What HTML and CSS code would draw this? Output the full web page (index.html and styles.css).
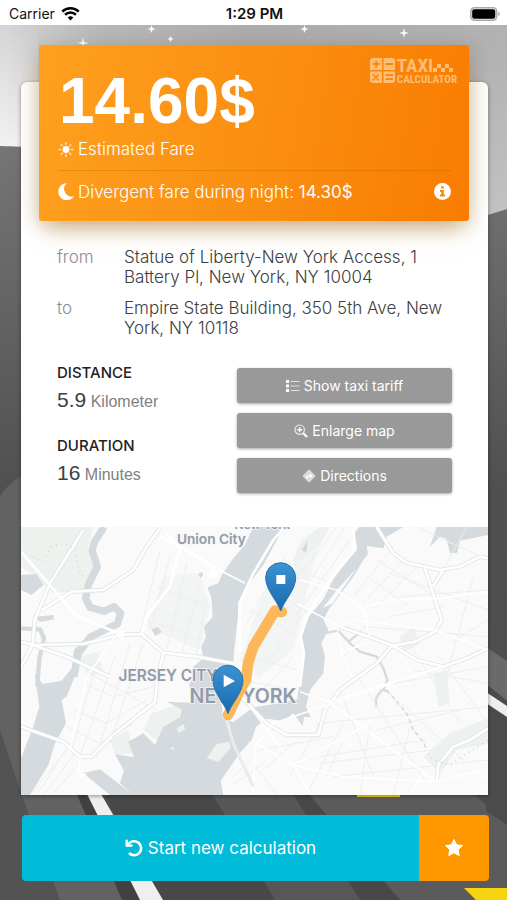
FILE: index.html
```html
<!DOCTYPE html>
<html lang="en">
<head>
    <meta charset="UTF-8">
    <meta name="viewport" content="width=device-width, initial-scale=1.0">
    <title>Taxi Calculator</title>
    <link rel="stylesheet" href="styles.css">
</head>
<body>
    <header class="status-bar">
        <div class="carrier">
            <span>Carrier</span>
            <svg class="wifi" viewBox="0 0 20 15">
                <path d="M10 14.5l3-3.2a4.3 4.3 0 0 0-6 0z"/>
                <path d="M4.2 8.3a8.3 8.3 0 0 1 11.6 0M1.2 5a12.6 12.6 0 0 1 17.6 0" fill="none" stroke="#000" stroke-width="2.7"/>
            </svg>
        </div>
        <time class="clock">1:29 PM</time>
        <div class="battery">
            <svg viewBox="0 0 30 14">
                <rect x="0.7" y="0.7" width="26" height="12.6" rx="3.6" fill="#ddd" stroke="#aaa" stroke-width="1.3"/>
                <rect x="2.2" y="2.2" width="23" height="9.6" rx="2.2"/>
                <path d="M28.2 4.8v4.4q1.6-.6 1.6-2.2t-1.6-2.2z" fill="#aaa"/>
            </svg>
        </div>
    </header>

    <main class="screen">
        <!-- Night road scenery -->
        <svg class="scenery" viewBox="0 0 507 875" preserveAspectRatio="none">
            <defs>
                <linearGradient id="sky" x1="0" y1="0" x2="1" y2="0">
                    <stop offset="0" stop-color="#d6d6d6"/>
                    <stop offset="0.2" stop-color="#b8b8b8"/>
                    <stop offset="0.5" stop-color="#acacac"/>
                    <stop offset="1" stop-color="#b2b2b2"/>
                </linearGradient>
                <linearGradient id="glow" x1="0" y1="0" x2="0" y2="1">
                    <stop offset="0" stop-color="#fff" stop-opacity="0"/>
                    <stop offset="1" stop-color="#fff" stop-opacity="0.75"/>
                </linearGradient>
                <linearGradient id="ground" x1="0" y1="0" x2="0" y2="1">
                    <stop offset="0" stop-color="#757575"/>
                    <stop offset="0.45" stop-color="#505050"/>
                    <stop offset="1" stop-color="#4c4c4c"/>
                </linearGradient>
            </defs>
            <rect width="507" height="200" fill="url(#sky)"/>
            <rect width="38" height="130" fill="url(#glow)"/>
            <rect x="470" y="20" width="37" height="180" fill="url(#glow)" opacity="0.3"/>
            <path d="M0 121L60 123L440 200L488 190L507 184V875H0z" fill="url(#ground)"/>
            <path d="M0 471Q10 455 40 440V765L75 765L130 875H0z" fill="#626262"/>
            <path d="M0 705L20 765L60 875H0z" fill="#535353"/>
            <path d="M75 765H88L142 875H122z" fill="#414141"/>
            <path d="M102 765H360L420 875H163z" fill="#484848"/>
            <path d="M210 765H290L360 875H275z" fill="#575757"/>
            <path d="M305 765H470L507 800V875H400z" fill="#5b5b5b"/>
            <path d="M87 769H101L163 875H140z" fill="#efefef"/>
            <path d="M486 622L507 636V676L486 659z" fill="#6a6a6a"/>
            <path d="M486 659L507 676V800L486 786z" fill="#4b4b4b"/>
            <path d="M486 667L507 681V692L486 678z" fill="#eee"/>
            <path d="M464 863H507V875H476zM357 768H400V772H357z" fill="#f5d311"/>
            <g fill="#fff">
                <path d="M151.500 0l1 3 3 1-3 1-1 3-1-3-3-1 3-1z"/>
                <path d="M304.500 0l1 3 3 1-3 1-1 3-1-3-3-1 3-1z"/>
                <path d="M404 3l1 4 4 1-4 1-1 4-1-4-4-1 4-1z"/>
                <path d="M83 12l1 5 5 1-5 1-1 3-1-3-5-1 5-1z"/>
                <path d="M170.500 11l1 2 2 1-2 1-1 2-1-2-2-1 2-1z"/>
            </g>
        </svg>

        <section class="card">
            <div class="fare">
                <div class="fare-top">
                    <h1 class="price">14.60$</h1>
                    <div class="logo">
                        <svg class="logo-keys" viewBox="0 0 25 25">
                            <path fill-rule="evenodd" d="M3 0h9v12H0V3q0-3 3-3zM5.200 2.700v2.400H2.800v2h2.400v2.400h2V7.100h2.400v-2H7.200V2.700zM13.500 0H22q3 0 3 3v9H13.500zM15.500 5.100v2h7.500v-2zM0 13.500h12V25H3q-3 0-3-3zM3.300 16l-1 1 2.500 2.400-2.500 2.400 1 1 2.500-2.500 2.500 2.500 1-1-2.500-2.400L9.300 17l-1-1-2.500 2.500zM13.500 13.500H25V22q0 3-3 3h-8.500zM15.500 16.200v1.800h7.500v-1.800zM15.500 20.300v1.800h7.500v-1.800z"/>
                        </svg>
                        <div class="logo-text">
                            <span class="logo-taxi">TAXI<svg class="checkers" viewBox="0 0 21 12"><path d="M0 8h4v4H0zM4 4h4v4H4zM8 8h4v4H8zM12 4h4v4h-4zM16 8h4v4h-4z"/></svg></span>
                            <span class="logo-calc">CALCULATOR</span>
                        </div>
                    </div>
                </div>
                <p class="fare-row">
                    <svg class="icon-md sun" viewBox="0 0 16 16">
                        <circle cx="8" cy="8" r="3.400"/>
                        <path d="M8 .5v3M8 12.500v3M.5 8h3M12.500 8h3M2.700 2.700l2.100 2.100M11.200 11.200l2.100 2.100M13.300 2.700l-2.100 2.100M4.800 11.200l-2.100 2.100" stroke="#fff" stroke-width="1.500" opacity="0.65"/>
                    </svg>
                    <span>Estimated Fare</span>
                </p>
                <div class="fare-row night">
                    <svg class="icon-md" viewBox="0 0 16 17">
                        <path d="M8.800.2A8.500 8.500 0 1 0 16 13.200 7.600 7.600 0 0 1 8.800.2z"/>
                    </svg>
                    <span>Divergent fare during night: <b>14.30$</b></span>
                    <button class="info" aria-label="Info">
                        <svg viewBox="0 0 17 17">
                            <circle cx="8.500" cy="8.500" r="8.500"/>
                            <path d="M7.200 3.200h2.600v2.400H7.200zM6 7h3.800v4.500H11v2H6v-2h1.200V9H6z" fill="#f98b0b"/>
                        </svg>
                    </button>
                </div>
            </div>

            <div class="details">
                <dl class="route">
                    <dt>from</dt>
                    <dd>Statue of Liberty-New York Access, 1 Battery Pl, New York, NY 10004</dd>
                    <dt>to</dt>
                    <dd>Empire State Building, 350 5th Ave, New York, NY 10118</dd>
                </dl>

                <div class="summary">
                    <div class="stats">
                        <div class="stat">
                            <h2>Distance</h2>
                            <p><strong>5.9</strong> Kilometer</p>
                        </div>
                        <div class="stat">
                            <h2>Duration</h2>
                            <p><strong>16</strong> Minutes</p>
                        </div>
                    </div>
                    <div class="actions">
                        <button class="btn">
                            <svg class="icon-sm" viewBox="0 0 14 14">
                                <path d="M0 1h3v3H0zM0 5.500h3v3H0zM0 10h3v3H0z"/>
                                <path d="M4.500 2h9v1h-9zM4.500 6.500h9v1h-9zM4.500 11h9v1h-9z" opacity="0.7"/>
                            </svg>
                            Show taxi tariff
                        </button>
                        <button class="btn">
                            <svg class="icon-sm" viewBox="0 0 14 14">
                                <circle cx="5.700" cy="5.700" r="4.700" fill="none" stroke="#fff" stroke-width="1.200" opacity="0.8"/>
                                <path d="M5 3.200h1.400V5h1.800v1.400H6.400v1.800H5V6.400H3.200V5H5z"/>
                                <path d="M9 9l4 4" stroke="#fff" stroke-width="2.200"/>
                            </svg>
                            Enlarge map
                        </button>
                        <button class="btn">
                            <svg class="icon-sm" viewBox="0 0 14 14">
                                <path d="M7 .3L13.700 7 7 13.700.3 7z" opacity="0.65"/>
                                <path d="M4.500 9.500V6.200H8V4.500L10.800 7 8 9.300V7.600H6v1.900z"/>
                            </svg>
                            Directions
                        </button>
                    </div>
                </div>
            </div>

            <!-- viewBox is three units per pixel -->
            <svg class="map" viewBox="63 51 1401 804" preserveAspectRatio="xMidYMid slice" role="img" aria-label="Route map">
                <defs>
                    <linearGradient id="pin" x1="0" y1="0" x2="0" y2="1">
                        <stop offset="0" stop-color="#3b94d2"/>
                        <stop offset="1" stop-color="#1a67b0"/>
                    </linearGradient>
                </defs>
                <rect x="63" y="51" width="1401" height="804" fill="#f9faf9"/>

                <!-- parks -->
                <g fill="#eef2ef">
                    <path d="M63 51H280L262 115L285 175L250 240L160 250L100 195L63 170z"/>
                    <path d="M905 90L960 51H990L920 180L885 205L880 150z"/>
                    <path d="M240 440L290 425L310 480L270 500zM455 610L545 580L540 620L470 690L430 660zM330 690L385 660L400 730L345 735z"/>
                    <path d="M1200 380L1240 350L1260 400L1210 430zM1300 490L1340 480L1350 580L1315 590zM1350 670L1464 625V700L1370 720L1320 790L1270 740z"/>
                </g>
                <g fill="#f3f4f4">
                    <path d="M490 200L600 190L630 290L600 420L440 350z"/>
                    <path d="M790 250L960 100L930 200L880 420L780 500L720 450z"/>
                </g>

                <!-- water -->
                <g fill="#d4dadd">
                    <path d="M760 51L735 105L700 145L665 195L655 220L622 232L634 262L638 320L612 350L618 380L604 410L610 445L580 470L590 495L568 520L572 578L500 575L545 598L540 622L490 650L465 705L430 670L385 695L402 742L345 733L372 782L360 820L400 855H670L662 812L690 772L720 728L755 690L768 650L800 626L850 633L880 610L908 648L912 620L932 622L918 590L930 540L970 490L975 440L964 400L985 360L970 330L985 300L1015 260L1060 200L1090 150L1104 132L1100 108L1150 115L1160 80L1210 51H1078L1062 70L1072 115L1040 152L1000 208L970 268L925 322L904 382L910 440L898 520L892 568L840 580L760 592L700 636L668 625L664 560L700 450L710 350L720 270L750 218L790 165L820 110L850 51z"/>
                    <path d="M104 490L128 522L185 512L215 475L222 420L250 390L232 480L200 560L185 570L198 640L165 700L145 765L90 855H63V745L98 655L118 590z"/>
                    <path d="M250 790L300 778L400 855H330zM63 195L110 192L130 225L95 255L63 240zM105 320L160 315L162 328L120 336z"/>
                    <path d="M1290 110L1320 80L1370 95L1464 51H1330L1350 130L1372 128L1380 92L1464 75V51H1310z"/>
                    <path d="M454 358l20-6 12 14-20 12zM594 192l12-6 4 10-8 8zM905 120l18-30-4 38z"/>
                </g>
                <g fill="none" stroke="#d4dadd" stroke-linejoin="round">
                    <path stroke-width="22" d="M312 51L284 95L276 120L292 170L265 225L257 265L270 292L312 304L342 290L362 310L352 342L330 352L270 382L235 430L222 500"/>
                    <path stroke-width="13" d="M63 355L120 358L132 385L118 445L112 530"/>
                    <path stroke-width="7" d="M970 370L1015 362L1050 400L1080 425L1130 440L1150 475L1162 510L1150 540L1165 545M1045 395L1085 365M1145 540L1128 565L1128 590"/>
                </g>
                <path d="M998 280L1070 175L1010 240L968 295z" fill="#f9faf9"/>
                <path d="M620 745L650 702L688 695L692 715L655 755zM530 655l20-12 6 14-20 12zM508 715l12-4 4 10z" fill="#eef2ef"/>

                <!-- small streets -->
                <g fill="none" stroke="#edeeee" stroke-width="3">
                    <path d="M480 120L420 370M510 140L450 360M560 160L500 420M600 230L545 430M620 260L590 430M470 230L630 290M450 290L610 340M440 330L610 390"/>
                    <path d="M250 520L340 560L460 530M220 600L320 640L440 570M200 650L300 700L400 640M300 420L215 720M345 440L240 740M390 400L290 740M430 400L330 700M250 480L470 600"/>
                    <path d="M210 700L110 855M225 730L130 855M240 760L155 855M200 720L95 850"/>
                    <path d="M860 250L1010 51M880 290L1035 51M830 400L1050 90M760 450L900 180M770 500L920 300M740 340L860 130M790 540L880 440M750 300L900 380M790 230L930 310M850 150L990 220M720 430L890 480M720 510L880 540"/>
                    <path d="M1060 260L1180 110M1090 280L1220 140M1120 300L1250 170M1100 200L1230 290M1130 150L1290 250M1170 320L1330 290M1030 440L1110 360M1090 350L1464 380M1200 260L1464 240M1170 190L1464 300M1330 180L1400 51M1250 51L1464 150"/>
                    <path d="M990 570L1180 520L1464 470M950 640L1464 590M1020 540L1120 800M1060 480L1280 820M1160 540L1400 760M1240 420L1380 640M1310 430L1464 640M1420 200L1340 500M1130 660L1380 600M780 720L1000 680M870 800L960 640M780 790L880 700M920 855L1030 640M980 800L1025 700M1080 855L1110 640M1180 855L1230 650M960 740L1280 690M1000 800L1464 750M960 760L1464 700M1240 480L1464 520M1350 400L1464 330M760 760L830 855M700 800L780 720M690 830L790 760"/>
                </g>

                <!-- main roads, grey casing under white -->
                <g fill="none" stroke-linejoin="round">
                    <g stroke="#e2e5e6" stroke-width="13">
                        <path d="M63 470L98 405L104 330L150 220L250 60M125 300L215 245L310 240L400 180L440 110L480 55M63 395L100 405L250 402L360 375L425 372L490 428L590 440L700 460"/>
                        <path d="M98 405L200 440L330 500M63 650L190 695L240 740L275 740L340 675L465 575L470 520L490 430"/>
                        <path d="M1130 51L1180 130L1220 158L1320 180L1380 170L1440 140L1464 145M1275 175L1325 330L1305 365L1245 395L1175 408L1130 460L1020 540L975 600L955 675L860 675L800 640L690 525"/>
                        <path d="M1020 350L1175 405L1250 450L1330 470L1400 445L1464 415M1310 810L1315 765L1360 710L1410 690L1464 655M1330 180L1298 230"/>
                    </g>
                    <g stroke="#fff" stroke-width="8">
                        <path d="M63 470L98 405L104 330L150 220L250 60M125 300L215 245L310 240L400 180L440 110L480 55M63 395L100 405L250 402L360 375L425 372L490 428L590 440L700 460"/>
                        <path d="M98 405L200 440L330 500M63 650L190 695L240 740L275 740L340 675L465 575L470 520L490 430"/>
                        <path d="M1130 51L1180 130L1220 158L1320 180L1380 170L1440 140L1464 145M1275 175L1325 330L1305 365L1245 395L1175 408L1130 460L1020 540L975 600L955 675L860 675L800 640L690 525"/>
                        <path d="M1020 350L1175 405L1250 450L1330 470L1400 445L1464 415M1310 810L1315 765L1360 710L1410 690L1464 655M1330 180L1298 230"/>
                        <path d="M63 125L180 260L225 315L360 372M425 372L440 320L510 230L520 180L540 120L500 70M480 80L560 120L640 170M720 430L718 280L760 190L820 90L850 55M1060 55L1065 120L990 210L925 310L902 380L912 430L900 530"/>
                    </g>
                    <g stroke="#fff" stroke-width="5">
                        <path d="M640 170L735 220M900 210L1010 240L1090 300L1110 385M890 280L1020 350L1060 330L1300 360L1464 420M1100 290L1180 270L1320 265L1464 245M1012 355L1025 430L1055 500M900 545L985 575L1060 630L1300 810M985 575L1330 470M1020 430L1100 400"/>
                        <path d="M750 590L880 765L930 850M770 700L880 765L1030 800L1300 815M760 855L765 710L820 640L1180 520M880 765L1110 640M345 380L260 500L210 720M240 740L235 790L260 795M1230 855L1270 790L1310 815L1430 785L1464 810"/>
                    </g>
                    <path d="M680 630L700 700L760 830" stroke="#e9ecec" stroke-width="9"/>
                    <path d="M1160 540L1220 610L1240 660L1270 695L1280 720" stroke="#e6cfd1" stroke-width="4" stroke-dasharray="14 8"/>
                    <path d="M100 140L125 155L155 110L190 100L225 120L240 190L265 210M1285 730L1300 750L1350 765L1400 730L1464 690" stroke="#d9d4d6" stroke-width="4" stroke-dasharray="4 12"/>
                </g>
                <circle cx="361" cy="372" r="12" fill="#fff"/>
                <circle cx="640" cy="190" r="14" fill="#fff"/>

                <!-- place names -->
                <g class="places">
                    <text x="634" y="101" font-size="41">Union City</text>
                    <text x="787" y="58" font-size="36">New York</text>
                    <text x="504" y="512" font-size="46">JERSEY CITY</text>
                    <text x="729" y="579" font-size="59">NEW YORK</text>
                </g>

                <!-- route and markers -->
                <path d="M684 615L720 540L738 510L744 460L760 410L825 302L845 306" fill="none" stroke="#fdb658" stroke-width="32" stroke-linejoin="round" stroke-linecap="round"/>
                <path id="marker" d="M842 303C832 272 797 240 797 203a45 45 0 0 1 90 0C887 240 852 272 842 303z" fill="url(#pin)" stroke="#2b72a8" stroke-width="3"/>
                <use href="#marker" x="-158" y="308"/>
                <path d="M829 195h27v27h-27z" fill="#fff"/>
                <path d="M671 494v38l34-19z" fill="#fff"/>
            </svg>
        </section>

        <footer class="bottom-bar">
            <button class="restart">
                <svg class="icon-lg" viewBox="0 0 18 18">
                    <path d="M3.200 5.500A7 7 0 1 1 4 14" fill="none" stroke="#fff" stroke-width="2.600"/>
                    <path d="M.5.800v7h7V5.400H3V.8z"/>
                </svg>
                Start new calculation
            </button>
            <button class="favorite" aria-label="Add to favorites">
                <svg class="icon-lg" viewBox="0 0 18 18">
                    <path d="M9 .5l2.600 5.300 5.900.8-4.300 4.100 1 5.900L9 13.800l-5.200 2.800 1-5.900L.5 6.600l5.900-.8z" stroke="#fff" stroke-linejoin="round"/>
                </svg>
            </button>
        </footer>
    </main>
</body>
</html>
```
FILE: styles.css
```css
:root {
    --orange: #ff9800;
    --cyan: #00bcd9;
    --grey: #999;
    --text: #3c4043;
    --muted: #8b8e93;
}

* {
    box-sizing: border-box;
}

body {
    margin: 0;
    min-height: 100vh;
    display: flex;
    flex-direction: column;
    font-family: Inter, "Liberation Sans", sans-serif;
    font-size: 17px;
    color: var(--text);
    background: #4c4c4c;
}

h1, h2, p, dl, dd {
    margin: 0;
}

svg {
    display: block;
}

button {
    border: none;
    padding: 0;
    font: inherit;
    color: white;
    cursor: pointer;
}

/* Status bar */
.status-bar {
    display: grid;
    grid-template-columns: 1fr auto 1fr;
    align-items: center;
    height: 25px;
    padding: 2px 7px 0 9px;
    background: white;
    color: #111;
    font-size: 14px;
}

.carrier {
    display: flex;
    align-items: center;
    gap: 6px;
}

.wifi {
    width: 19px;
    height: 14px;
}

.clock {
    font-size: 15px;
    font-weight: 600;
}

.battery {
    justify-self: end;
}

.battery svg {
    width: 30px;
    height: 14px;
}

/* Screen */
.screen {
    position: relative;
    flex: 1;
    padding: 57px 19px 19px 21px;
}

.scenery {
    position: absolute;
    inset: 0;
    width: 100%;
    height: 100%;
}

.card {
    position: relative;
    background: white;
    border-radius: 6px 6px 0 0;
    box-shadow: 0 1px 4px rgba(0, 0, 0, 0.4);
}

/* Fare panel */
.fare {
    position: relative;
    top: -37px;
    margin: 0 19px -37px 18px;
    padding: 13px 12px 9px 19px;
    border-radius: 3px;
    background: linear-gradient(100deg, #ffa01e, #fa8f12 50%, #f97c00);
    box-shadow: 0 10px 24px -6px rgba(190, 120, 20, 0.6), 0 4px 20px rgba(0, 0, 0, 0.14);
    color: white;
}

.fare svg {
    fill: white;
}

.fare-top {
    display: flex;
    justify-content: space-between;
    align-items: flex-start;
}

.price {
    padding: 6px 0 1px 1px;
    font: bold 64px/74px "Liberation Sans", sans-serif;
}

.logo {
    display: flex;
    gap: 2px;
    color: #fdbd72;
}

.logo svg {
    fill: #fdbd72;
}

.logo-keys {
    width: 25px;
    height: 25px;
}

.logo-text {
    display: flex;
    flex-direction: column;
    font-family: "Liberation Sans Narrow", "Roboto Condensed", "Liberation Sans", sans-serif;
    font-weight: bold;
}

.logo-taxi {
    display: flex;
    align-items: center;
    font-size: 19px;
    line-height: 15px;
}

.checkers {
    width: 21px;
    height: 12px;
}

.logo-calc {
    font-size: 11px;
    line-height: 13px;
}

.fare-row {
    display: flex;
    align-items: center;
    gap: 4px;
    height: 20px;
    margin-right: 6px;
    font-weight: 300;
}

.fare-row b {
    font-weight: 400;
}

.night {
    margin-top: 11px;
    height: 42px;
    border-top: 1px solid rgba(160, 90, 0, 0.25);
}

.icon-md {
    width: 16px;
    height: 17px;
}

.info {
    margin-left: auto;
    background: none;
}

.info svg {
    width: 17px;
    height: 17px;
}

/* Trip details */
.details {
    padding: 26px 36px 34px;
}

.route {
    display: grid;
    grid-template-columns: 67px 1fr;
    row-gap: 11px;
    line-height: 20px;
    font-weight: 300;
}

.route dt {
    color: var(--muted);
}

.summary {
    display: flex;
    justify-content: space-between;
    margin-top: 25px;
}

.stats {
    display: flex;
    flex-direction: column;
    gap: 20px;
}

.stat h2 {
    font-size: 15px;
    line-height: 20px;
    font-weight: 500;
    text-transform: uppercase;
    color: #222;
}

.stat p {
    margin-top: 3px;
    font-family: "Liberation Sans", sans-serif;
    font-size: 16px;
    line-height: 28px;
    color: #808080;
}

.stat strong {
    font-size: 21px;
    font-weight: 400;
    color: var(--text);
}

.actions {
    display: flex;
    flex-direction: column;
    gap: 10px;
    flex: 0 0 215px;
    padding-top: 5px;
}

.btn {
    display: flex;
    align-items: center;
    justify-content: center;
    gap: 4px;
    height: 35px;
    border-radius: 3px;
    background: var(--grey);
    box-shadow: 0 1px 3px rgba(0, 0, 0, 0.35);
    font-size: 14px;
}

.icon-sm {
    width: 14px;
    height: 14px;
    fill: white;
}

/* Map */
.map {
    width: 100%;
    height: auto;
}

.places text {
    font-family: Inter, "Open Sans", sans-serif;
    font-weight: 600;
    fill: #929baa;
    stroke: #f4f5f6;
    stroke-width: 5px;
    paint-order: stroke;
    text-anchor: middle;
}

/* Bottom buttons */
.bottom-bar {
    position: relative;
    display: flex;
    margin: 20px -1px 0 1px;
    height: 66px;
    border-radius: 4px;
    overflow: hidden;
}

.restart {
    flex: 1;
    display: flex;
    align-items: center;
    justify-content: center;
    gap: 5px;
    background: var(--cyan);
}

.favorite {
    display: flex;
    align-items: center;
    justify-content: center;
    width: 70px;
    background: var(--orange);
}

.icon-lg {
    width: 18px;
    height: 18px;
    fill: white;
}
```
